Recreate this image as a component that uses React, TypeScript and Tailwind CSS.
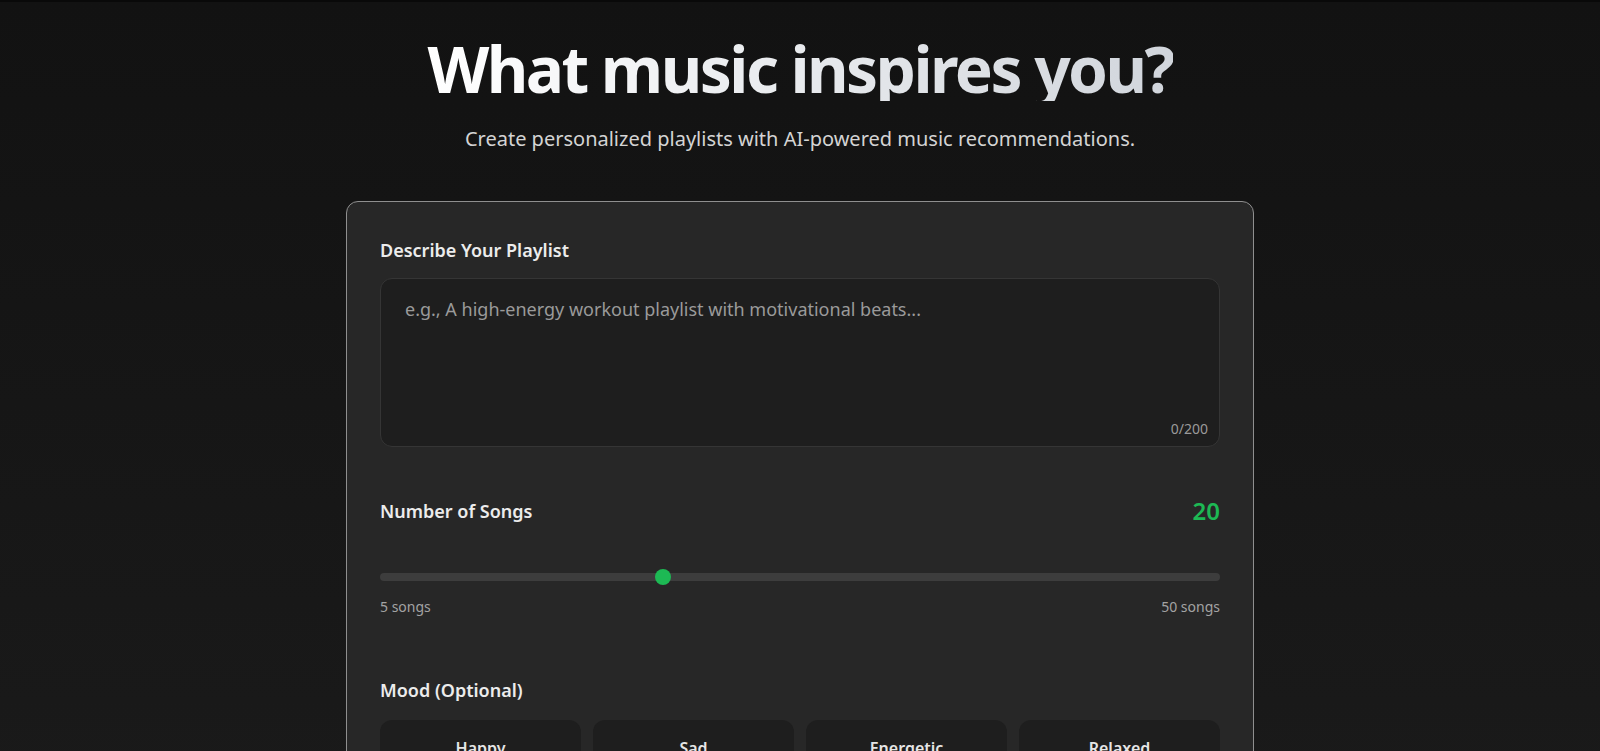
import { useState } from "react";

const MOODS = ["Happy", "Sad", "Energetic", "Relaxed", "Romantic", "Focused", "Nostalgic", "Party"];
const GENRES = ["Pop", "Rock", "Hip-Hop", "Electronic", "Jazz", "Classical", "R&B", "Indie"];

const MIN_SONGS = 5;
const MAX_SONGS = 50;

function SongSlider({ value, onChange }: { value: number; onChange: (v: number) => void }) {
  const pct = (value - MIN_SONGS) / (MAX_SONGS - MIN_SONGS);

  return (
    <div>
      <div className="relative h-4 flex items-center">
        <div className="w-full h-2 rounded-full bg-[#3d3d3d]" />
        <div
          className="absolute w-4 h-4 rounded-full bg-[#1db954]"
          style={{ left: `calc(${pct} * (100% - 16px))` }}
        />
        <input
          type="range"
          min={MIN_SONGS}
          max={MAX_SONGS}
          value={value}
          onChange={(e) => onChange(Number(e.target.value))}
          className="absolute inset-0 w-full opacity-0 cursor-pointer"
          aria-label="Number of songs"
        />
      </div>
      <div className="mt-3 flex justify-between text-sm text-[#a3a3a3]">
        <span>{MIN_SONGS} songs</span>
        <span>{MAX_SONGS} songs</span>
      </div>
    </div>
  );
}

function OptionGrid({
  options,
  selected,
  onSelect,
}: {
  options: string[];
  selected: string | null;
  onSelect: (v: string | null) => void;
}) {
  return (
    <div className="grid grid-cols-4 gap-3">
      {options.map((o) => (
        <button
          key={o}
          onClick={() => onSelect(selected === o ? null : o)}
          className={
            selected === o
              ? "rounded-xl bg-[#1db954] py-4 text-base font-semibold text-black"
              : "rounded-xl bg-[#1e1e1e] py-4 text-base font-semibold text-[#e5e5e5]"
          }
        >
          {o}
        </button>
      ))}
    </div>
  );
}

export default function App() {
  const [prompt, setPrompt] = useState("");
  const [songs, setSongs] = useState(20);
  const [mood, setMood] = useState<string | null>(null);
  const [genre, setGenre] = useState<string | null>(null);

  return (
    <div
      className="min-h-screen border-t-2 border-[#090909] bg-linear-to-b from-[#121212] to-[#1f1f1f] text-white pb-20"
      style={{ fontFamily: '"Noto Sans", "Open Sans", sans-serif' }}
    >
      <header className="pt-[35px] text-center">
        <h1 className="inline-block text-[64px] font-bold leading-none tracking-[-0.04em] bg-linear-to-r from-white to-gray-300 bg-clip-text text-transparent">
          What music inspires you?
        </h1>
        <p className="mt-6 text-xl text-[#d4d4d4]">
          Create personalized playlists with AI-powered music recommendations.
        </p>
      </header>

      <main className="mt-12 mx-auto max-w-[908px] rounded-xl border border-[#8f8f8f] bg-[#272727] px-[33px] pt-[34px] pb-[33px]">
        {/* Prompt */}
        <section>
          <label htmlFor="prompt" className="block text-lg font-semibold text-[#ececec] mb-3.5">
            Describe Your Playlist
          </label>
          <div className="relative">
            <textarea
              id="prompt"
              value={prompt}
              maxLength={200}
              onChange={(e) => setPrompt(e.target.value)}
              placeholder="e.g., A high-energy workout playlist with motivational beats..."
              className="block w-full h-[169px] resize-none rounded-xl border border-[#353535] bg-[#1e1e1e] px-6 py-4 text-lg text-white placeholder:text-[#9a9a9a] outline-none"
            />
            <span className="absolute bottom-2 right-3 text-sm text-[#9a9a9a]">
              {prompt.length}/200
            </span>
          </div>
        </section>

        {/* Number of songs */}
        <section className="mt-12">
          <div className="flex items-center justify-between">
            <span className="text-lg font-semibold text-[#ececec]">Number of Songs</span>
            <span className="text-2xl font-semibold text-[#1db954]">{songs}</span>
          </div>
          <div className="mt-[42px]">
            <SongSlider value={songs} onChange={setSongs} />
          </div>
        </section>

        {/* Mood */}
        <section className="mt-[59px]">
          <p className="text-lg font-semibold text-[#ececec] mb-4">Mood (Optional)</p>
          <OptionGrid options={MOODS} selected={mood} onSelect={setMood} />
        </section>

        {/* Genre */}
        <section className="mt-12">
          <p className="text-lg font-semibold text-[#ececec] mb-4">Genre (Optional)</p>
          <OptionGrid options={GENRES} selected={genre} onSelect={setGenre} />
        </section>

        <button className="mt-12 w-full rounded-full bg-[#1db954] py-4 text-lg font-bold text-black">
          Generate Playlist
        </button>
      </main>
    </div>
  );
}
